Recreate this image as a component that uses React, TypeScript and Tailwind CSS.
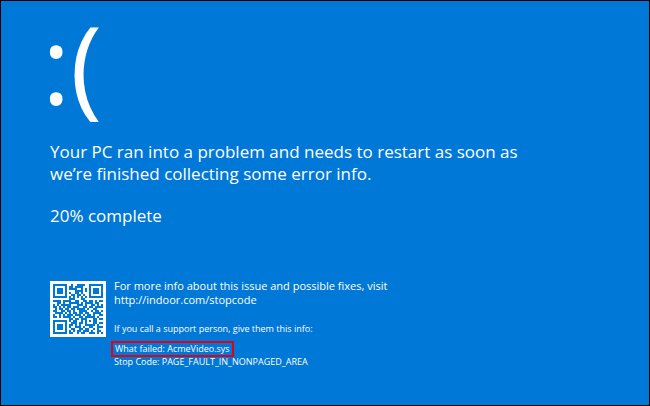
import React from 'react';

// One string per row, # is a dark module
const QR_ROWS = [
  '#######..#..####..#######',
  '#.....#.##.####...#.....#',
  '#.###.#.####..#.#.#.###.#',
  '#.###.#....####.#.#.###.#',
  '#.###.#.#..##.#...#.###.#',
  '#.....#..##.##.#..#.....#',
  '#######.#.#.#.#.#.#######',
  '........###...##.........',
  '####.####..##..##.##.#.##',
  '..##.#..#####.#.####.##..',
  '#.#.#####...###.#..##.#.#',
  '##.#.#.##.###..##.##.####',
  '.#.##.##.##.####.#..##...',
  '##..##.##.#..####..#.##.#',
  '.####.#.#.##.##.##..####.',
  '#..#.#.###.###.#.##.#..##',
  '##.#.####.#..##.#####.#..',
  '........##.##.###...##.##',
  '#######.#.##..#.#.#.##...',
  '#.....#..###.##.#...##.##',
  '#.###.#.##.#.#..#####.#..',
  '#.###.#.#..###.#..##..###',
  '#.###.#..##..##.##..#.#..',
  '#.....#.#.#.##.###.#..##.',
  '#######.##..#.##..###.#.#',
];

const QrCode: React.FC = () => (
  <svg
    viewBox="0 0 56 56"
    className="mt-0.5 h-14 w-14 shrink-0 bg-white"
    role="img"
    aria-label="QR code"
  >
    <g fill="#0078d7" transform="translate(3 3)">
      {QR_ROWS.map((row, y) =>
        row.split('').map((cell, x) =>
          cell === '#' ? (
            <rect key={`${x}-${y}`} x={x * 2} y={y * 2} width={2} height={2} />
          ) : null
        )
      )}
    </g>
  </svg>
);

const StopDetails: React.FC = () => (
  <div className="text-[9px] leading-[11px]">
    <p>If you call a support person, give them this info:</p>
    <p className="-ml-[3px] mt-[7px] w-fit border-2 border-[#e60012] px-0.5 leading-[12px]">
      What failed: AcmeVideo.sys
    </p>
    <p className="leading-[9px]">Stop Code: PAGE_FAULT_IN_NONPAGED_AREA</p>
  </div>
);

export default function App() {
  return (
    <main className="min-h-screen border border-black bg-[#0078d7] px-[49px] pt-5 font-['Open_Sans',sans-serif] text-white">
      <div className="-ml-2 text-[108px] leading-[86px]">:(</div>

      <div className="mt-[34px] text-[17px] leading-[22px]">
        <h1>
          Your PC ran into a problem and needs to restart as soon as
          <br />
          we’re finished collecting some error info.
        </h1>
        <p className="mt-5">20% complete</p>
      </div>

      <div className="mt-[52px] flex gap-2">
        <QrCode />
        <div>
          <p className="mb-4 text-[11px] leading-[14px]">
            For more info about this issue and possible fixes, visit
            <br />
            <a href="http://indoor.com/stopcode">http://indoor.com/stopcode</a>
          </p>
          <StopDetails />
        </div>
      </div>
    </main>
  );
}
